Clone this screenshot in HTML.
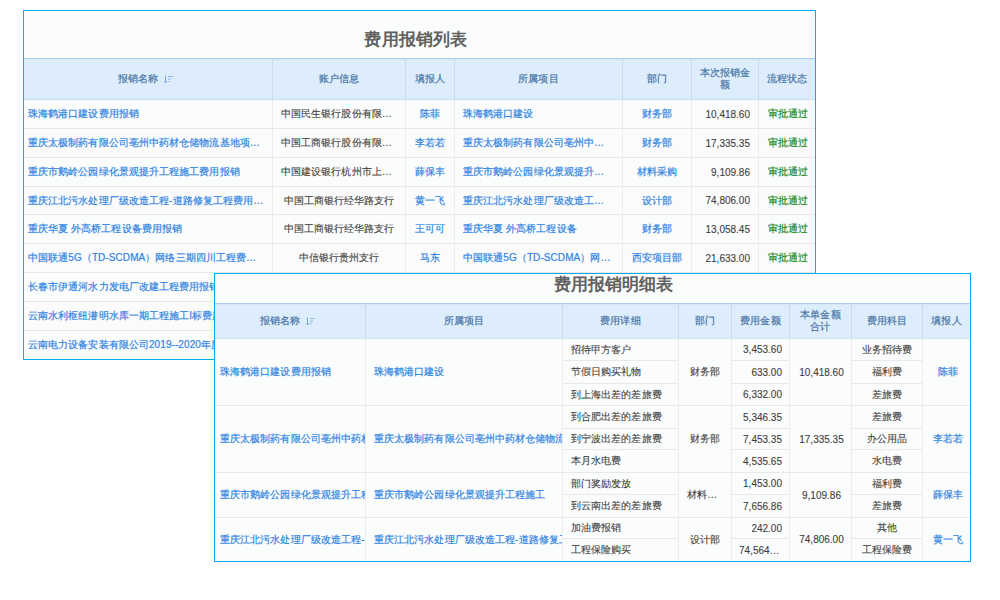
<!DOCTYPE html>
<html><head><meta charset="utf-8"><style>
html,body{margin:0;padding:0;background:#fff;width:1000px;height:600px;overflow:hidden}
body{position:relative;font-family:"Liberation Sans",sans-serif}
#t1,#t2{position:absolute;left:0;top:0;width:1000px;height:600px}
.c{position:absolute;box-sizing:border-box;-webkit-text-stroke-width:0.2px;letter-spacing:0.08px;display:flex;align-items:center;white-space:nowrap;overflow:hidden;line-height:12px;text-align:center}
.c span{display:block}
.c.clip span{overflow:visible}
.title{position:absolute;box-sizing:border-box;display:flex;align-items:center;justify-content:center;font-size:17px;font-weight:bold;color:#616161;line-height:20px;white-space:nowrap}
.d span{-webkit-text-stroke-width:0.1px}
.n span{letter-spacing:0;-webkit-text-stroke-width:0.1px;position:relative;top:0.5px}
.h span{display:flex;align-items:center;justify-content:center;flex-wrap:wrap}
</style></head><body>
<div id="t1">
<div style="position:absolute;left:23px;top:10px;width:793px;height:350px;background:#02acee"></div>
<div style="position:absolute;left:24px;top:11px;width:791px;height:47px;background:#fbfcfc"></div>
<div style="position:absolute;left:24px;top:58px;width:791px;height:1px;background:#a8cdee"></div>
<div style="position:absolute;left:24px;top:59px;width:791px;height:40px;background:#deedfb"></div>
<div style="position:absolute;left:24px;top:57px;width:791px;height:1px;background:#ffffff"></div>
<div style="position:absolute;left:24px;top:59px;width:791px;height:1px;background:#d6e8f8"></div>
<div style="position:absolute;left:24px;top:99px;width:791px;height:1px;background:#c8ddf0"></div>
<div style="position:absolute;left:272px;top:59px;width:1px;height:40px;background:#c6dcee"></div>
<div style="position:absolute;left:405px;top:59px;width:1px;height:40px;background:#c6dcee"></div>
<div style="position:absolute;left:454px;top:59px;width:1px;height:40px;background:#c6dcee"></div>
<div style="position:absolute;left:622px;top:59px;width:1px;height:40px;background:#c6dcee"></div>
<div style="position:absolute;left:691px;top:59px;width:1px;height:40px;background:#c6dcee"></div>
<div style="position:absolute;left:758px;top:59px;width:1px;height:40px;background:#c6dcee"></div>
<div style="position:absolute;left:24px;top:100px;width:791px;height:28px;background:#fbfcfc"></div>
<div style="position:absolute;left:24px;top:128px;width:791px;height:1px;background:#e8e8e8"></div>
<div style="position:absolute;left:24px;top:129px;width:791px;height:28px;background:#fbfbfb"></div>
<div style="position:absolute;left:24px;top:157px;width:791px;height:1px;background:#e8e8e8"></div>
<div style="position:absolute;left:24px;top:158px;width:791px;height:28px;background:#fbfcfc"></div>
<div style="position:absolute;left:24px;top:186px;width:791px;height:1px;background:#e8e8e8"></div>
<div style="position:absolute;left:24px;top:187px;width:791px;height:27px;background:#fbfbfb"></div>
<div style="position:absolute;left:24px;top:214px;width:791px;height:1px;background:#e8e8e8"></div>
<div style="position:absolute;left:24px;top:215px;width:791px;height:28px;background:#fbfcfc"></div>
<div style="position:absolute;left:24px;top:243px;width:791px;height:1px;background:#e8e8e8"></div>
<div style="position:absolute;left:24px;top:244px;width:791px;height:28px;background:#fbfbfb"></div>
<div style="position:absolute;left:24px;top:272px;width:791px;height:1px;background:#e8e8e8"></div>
<div style="position:absolute;left:24px;top:273px;width:791px;height:28px;background:#fbfcfc"></div>
<div style="position:absolute;left:24px;top:301px;width:791px;height:1px;background:#e8e8e8"></div>
<div style="position:absolute;left:24px;top:302px;width:791px;height:28px;background:#fbfbfb"></div>
<div style="position:absolute;left:24px;top:330px;width:791px;height:1px;background:#e8e8e8"></div>
<div style="position:absolute;left:24px;top:331px;width:791px;height:28px;background:#fbfcfc"></div>
<div style="position:absolute;left:272px;top:100px;width:1px;height:259px;background:#ececec"></div>
<div style="position:absolute;left:405px;top:100px;width:1px;height:259px;background:#ececec"></div>
<div style="position:absolute;left:454px;top:100px;width:1px;height:259px;background:#ececec"></div>
<div style="position:absolute;left:622px;top:100px;width:1px;height:259px;background:#ececec"></div>
<div style="position:absolute;left:691px;top:100px;width:1px;height:259px;background:#ececec"></div>
<div style="position:absolute;left:758px;top:100px;width:1px;height:259px;background:#ececec"></div>
<div class="title" style="left:24px;top:11px;width:791px;height:47px;padding-right:7px;padding-top:11px;letter-spacing:0.2px">费用报销列表</div>
<div class="c h" style="left:24px;top:59px;width:248px;height:40px;justify-content:center;padding:0 4px;color:#4674a6;font-size:10px;"><span>报销名称<svg width="10" height="9" viewBox="0 0 10 9" style="margin-left:6px;margin-right:4px;flex:none"><path d="M1.5 0.5V7.5" stroke="#79aadb" stroke-width="1"/><path d="M0 6.3L1.5 8L3 6.3" stroke="#79aadb" fill="none" stroke-width="1"/><path d="M4 1.5H9M4 4H7M4 6.5H5.5" stroke="#8db8e2" stroke-width="1"/></svg></span></div>
<div class="c h" style="left:273px;top:59px;width:132px;height:40px;justify-content:center;padding:0 4px;color:#4674a6;font-size:10px;"><span>账户信息</span></div>
<div class="c h" style="left:406px;top:59px;width:48px;height:40px;justify-content:center;padding:0 4px;color:#4674a6;font-size:10px;"><span>填报人</span></div>
<div class="c h" style="left:455px;top:59px;width:167px;height:40px;justify-content:center;padding:0 4px;color:#4674a6;font-size:10px;"><span>所属项目</span></div>
<div class="c h" style="left:623px;top:59px;width:68px;height:40px;justify-content:center;padding:0 4px;color:#4674a6;font-size:10px;"><span>部门</span></div>
<div class="c h" style="left:692px;top:59px;width:66px;height:40px;justify-content:center;padding:0 4px;color:#4674a6;font-size:10px;"><span>本次报销金<br>额</span></div>
<div class="c h" style="left:759px;top:59px;width:56px;height:40px;justify-content:center;padding:0 4px;color:#4674a6;font-size:10px;"><span>流程状态</span></div>
<div class="c " style="left:24px;top:100px;width:248px;height:28px;justify-content:flex-start;padding:0 4px;color:#2d83e3;font-size:10px;"><span>珠海鹤港口建设费用报销</span></div>
<div class="c  d" style="left:273px;top:100px;width:132px;height:28px;justify-content:flex-start;padding:0 8px;color:#3d3d3d;font-size:10px;"><span>中国民生银行股份有限…</span></div>
<div class="c " style="left:406px;top:100px;width:48px;height:28px;justify-content:center;padding:0 4px;color:#2d83e3;font-size:10px;"><span>陈菲</span></div>
<div class="c " style="left:455px;top:100px;width:167px;height:28px;justify-content:flex-start;padding:0 8px;color:#2d83e3;font-size:10px;"><span>珠海鹤港口建设</span></div>
<div class="c " style="left:623px;top:100px;width:68px;height:28px;justify-content:center;padding:0 4px;color:#2d83e3;font-size:10px;"><span>财务部</span></div>
<div class="c n d" style="left:692px;top:100px;width:66px;height:28px;justify-content:flex-end;padding:0 8px;color:#3d3d3d;font-size:10px;"><span>10,418.60</span></div>
<div class="c " style="left:759px;top:100px;width:56px;height:28px;justify-content:center;padding:0 4px;color:#218a21;font-size:10px;padding-left:4px;padding-right:2px"><span>审批通过</span></div>
<div class="c " style="left:24px;top:129px;width:248px;height:28px;justify-content:flex-start;padding:0 4px;color:#2d83e3;font-size:10px;"><span>重庆太极制药有限公司亳州中药材仓储物流基地项…</span></div>
<div class="c  d" style="left:273px;top:129px;width:132px;height:28px;justify-content:flex-start;padding:0 8px;color:#3d3d3d;font-size:10px;"><span>中国工商银行股份有限…</span></div>
<div class="c " style="left:406px;top:129px;width:48px;height:28px;justify-content:center;padding:0 4px;color:#2d83e3;font-size:10px;"><span>李若若</span></div>
<div class="c " style="left:455px;top:129px;width:167px;height:28px;justify-content:flex-start;padding:0 8px;color:#2d83e3;font-size:10px;"><span>重庆太极制药有限公司亳州中…</span></div>
<div class="c " style="left:623px;top:129px;width:68px;height:28px;justify-content:center;padding:0 4px;color:#2d83e3;font-size:10px;"><span>财务部</span></div>
<div class="c n d" style="left:692px;top:129px;width:66px;height:28px;justify-content:flex-end;padding:0 8px;color:#3d3d3d;font-size:10px;"><span>17,335.35</span></div>
<div class="c " style="left:759px;top:129px;width:56px;height:28px;justify-content:center;padding:0 4px;color:#218a21;font-size:10px;padding-left:4px;padding-right:2px"><span>审批通过</span></div>
<div class="c " style="left:24px;top:158px;width:248px;height:28px;justify-content:flex-start;padding:0 4px;color:#2d83e3;font-size:10px;"><span>重庆市鹅岭公园绿化景观提升工程施工费用报销</span></div>
<div class="c  d" style="left:273px;top:158px;width:132px;height:28px;justify-content:flex-start;padding:0 8px;color:#3d3d3d;font-size:10px;"><span>中国建设银行杭州市上…</span></div>
<div class="c " style="left:406px;top:158px;width:48px;height:28px;justify-content:center;padding:0 4px;color:#2d83e3;font-size:10px;"><span>薛保丰</span></div>
<div class="c " style="left:455px;top:158px;width:167px;height:28px;justify-content:flex-start;padding:0 8px;color:#2d83e3;font-size:10px;"><span>重庆市鹅岭公园绿化景观提升…</span></div>
<div class="c " style="left:623px;top:158px;width:68px;height:28px;justify-content:center;padding:0 4px;color:#2d83e3;font-size:10px;"><span>材料采购</span></div>
<div class="c n d" style="left:692px;top:158px;width:66px;height:28px;justify-content:flex-end;padding:0 8px;color:#3d3d3d;font-size:10px;"><span>9,109.86</span></div>
<div class="c " style="left:759px;top:158px;width:56px;height:28px;justify-content:center;padding:0 4px;color:#218a21;font-size:10px;padding-left:4px;padding-right:2px"><span>审批通过</span></div>
<div class="c " style="left:24px;top:187px;width:248px;height:27px;justify-content:flex-start;padding:0 4px;color:#2d83e3;font-size:10px;"><span>重庆江北污水处理厂级改造工程-道路修复工程费用…</span></div>
<div class="c  d" style="left:273px;top:187px;width:132px;height:27px;justify-content:center;padding:0 8px;color:#3d3d3d;font-size:10px;"><span>中国工商银行经华路支行</span></div>
<div class="c " style="left:406px;top:187px;width:48px;height:27px;justify-content:center;padding:0 4px;color:#2d83e3;font-size:10px;"><span>黄一飞</span></div>
<div class="c " style="left:455px;top:187px;width:167px;height:27px;justify-content:flex-start;padding:0 8px;color:#2d83e3;font-size:10px;"><span>重庆江北污水处理厂级改造工…</span></div>
<div class="c " style="left:623px;top:187px;width:68px;height:27px;justify-content:center;padding:0 4px;color:#2d83e3;font-size:10px;"><span>设计部</span></div>
<div class="c n d" style="left:692px;top:187px;width:66px;height:27px;justify-content:flex-end;padding:0 8px;color:#3d3d3d;font-size:10px;"><span>74,806.00</span></div>
<div class="c " style="left:759px;top:187px;width:56px;height:27px;justify-content:center;padding:0 4px;color:#218a21;font-size:10px;padding-left:4px;padding-right:2px"><span>审批通过</span></div>
<div class="c " style="left:24px;top:215px;width:248px;height:28px;justify-content:flex-start;padding:0 4px;color:#2d83e3;font-size:10px;"><span>重庆华夏 外高桥工程设备费用报销</span></div>
<div class="c  d" style="left:273px;top:215px;width:132px;height:28px;justify-content:center;padding:0 8px;color:#3d3d3d;font-size:10px;"><span>中国工商银行经华路支行</span></div>
<div class="c " style="left:406px;top:215px;width:48px;height:28px;justify-content:center;padding:0 4px;color:#2d83e3;font-size:10px;"><span>王可可</span></div>
<div class="c " style="left:455px;top:215px;width:167px;height:28px;justify-content:flex-start;padding:0 8px;color:#2d83e3;font-size:10px;"><span>重庆华夏 外高桥工程设备</span></div>
<div class="c " style="left:623px;top:215px;width:68px;height:28px;justify-content:center;padding:0 4px;color:#2d83e3;font-size:10px;"><span>财务部</span></div>
<div class="c n d" style="left:692px;top:215px;width:66px;height:28px;justify-content:flex-end;padding:0 8px;color:#3d3d3d;font-size:10px;"><span>13,058.45</span></div>
<div class="c " style="left:759px;top:215px;width:56px;height:28px;justify-content:center;padding:0 4px;color:#218a21;font-size:10px;padding-left:4px;padding-right:2px"><span>审批通过</span></div>
<div class="c " style="left:24px;top:244px;width:248px;height:28px;justify-content:flex-start;padding:0 4px;color:#2d83e3;font-size:10px;"><span>中国联通5G（TD-SCDMA）网络三期四川工程费…</span></div>
<div class="c  d" style="left:273px;top:244px;width:132px;height:28px;justify-content:center;padding:0 8px;color:#3d3d3d;font-size:10px;"><span>中信银行贵州支行</span></div>
<div class="c " style="left:406px;top:244px;width:48px;height:28px;justify-content:center;padding:0 4px;color:#2d83e3;font-size:10px;"><span>马东</span></div>
<div class="c " style="left:455px;top:244px;width:167px;height:28px;justify-content:flex-start;padding:0 8px;color:#2d83e3;font-size:10px;"><span>中国联通5G（TD-SCDMA）网…</span></div>
<div class="c " style="left:623px;top:244px;width:68px;height:28px;justify-content:center;padding:0 4px;color:#2d83e3;font-size:10px;"><span>西安项目部</span></div>
<div class="c n d" style="left:692px;top:244px;width:66px;height:28px;justify-content:flex-end;padding:0 8px;color:#3d3d3d;font-size:10px;"><span>21,633.00</span></div>
<div class="c " style="left:759px;top:244px;width:56px;height:28px;justify-content:center;padding:0 4px;color:#218a21;font-size:10px;padding-left:4px;padding-right:2px"><span>审批通过</span></div>
<div class="c " style="left:24px;top:273px;width:248px;height:28px;justify-content:flex-start;padding:0 4px;color:#2d83e3;font-size:10px;"><span>长春市伊通河水力发电厂改建工程费用报销</span></div>
<div class="c  d" style="left:273px;top:273px;width:132px;height:28px;justify-content:center;padding:0 8px;color:#3d3d3d;font-size:10px;"><span>中国工商银行经华路支行</span></div>
<div class="c " style="left:406px;top:273px;width:48px;height:28px;justify-content:center;padding:0 4px;color:#2d83e3;font-size:10px;"><span>黄一飞</span></div>
<div class="c " style="left:455px;top:273px;width:167px;height:28px;justify-content:flex-start;padding:0 8px;color:#2d83e3;font-size:10px;"><span>长春市伊通河水力发电厂改建</span></div>
<div class="c " style="left:623px;top:273px;width:68px;height:28px;justify-content:center;padding:0 4px;color:#2d83e3;font-size:10px;"><span>设计部</span></div>
<div class="c n d" style="left:692px;top:273px;width:66px;height:28px;justify-content:flex-end;padding:0 8px;color:#3d3d3d;font-size:10px;"><span>12,000.00</span></div>
<div class="c " style="left:759px;top:273px;width:56px;height:28px;justify-content:center;padding:0 4px;color:#218a21;font-size:10px;padding-left:4px;padding-right:2px"><span>审批通过</span></div>
<div class="c " style="left:24px;top:302px;width:248px;height:28px;justify-content:flex-start;padding:0 4px;color:#2d83e3;font-size:10px;"><span>云南水利枢纽潜明水库一期工程施工I标费用报销</span></div>
<div class="c  d" style="left:273px;top:302px;width:132px;height:28px;justify-content:center;padding:0 8px;color:#3d3d3d;font-size:10px;"><span>中国工商银行经华路支行</span></div>
<div class="c " style="left:406px;top:302px;width:48px;height:28px;justify-content:center;padding:0 4px;color:#2d83e3;font-size:10px;"><span>黄一飞</span></div>
<div class="c " style="left:455px;top:302px;width:167px;height:28px;justify-content:flex-start;padding:0 8px;color:#2d83e3;font-size:10px;"><span>云南水利枢纽潜明水库</span></div>
<div class="c " style="left:623px;top:302px;width:68px;height:28px;justify-content:center;padding:0 4px;color:#2d83e3;font-size:10px;"><span>设计部</span></div>
<div class="c n d" style="left:692px;top:302px;width:66px;height:28px;justify-content:flex-end;padding:0 8px;color:#3d3d3d;font-size:10px;"><span>12,000.00</span></div>
<div class="c " style="left:759px;top:302px;width:56px;height:28px;justify-content:center;padding:0 4px;color:#218a21;font-size:10px;padding-left:4px;padding-right:2px"><span>审批通过</span></div>
<div class="c " style="left:24px;top:331px;width:248px;height:28px;justify-content:flex-start;padding:0 4px;color:#2d83e3;font-size:10px;"><span>云南电力设备安装有限公司2019--2020年度费用报销</span></div>
<div class="c  d" style="left:273px;top:331px;width:132px;height:28px;justify-content:center;padding:0 8px;color:#3d3d3d;font-size:10px;"><span>中国工商银行经华路支行</span></div>
<div class="c " style="left:406px;top:331px;width:48px;height:28px;justify-content:center;padding:0 4px;color:#2d83e3;font-size:10px;"><span>黄一飞</span></div>
<div class="c " style="left:455px;top:331px;width:167px;height:28px;justify-content:flex-start;padding:0 8px;color:#2d83e3;font-size:10px;"><span>云南电力设备安装</span></div>
<div class="c " style="left:623px;top:331px;width:68px;height:28px;justify-content:center;padding:0 4px;color:#2d83e3;font-size:10px;"><span>设计部</span></div>
<div class="c n d" style="left:692px;top:331px;width:66px;height:28px;justify-content:flex-end;padding:0 8px;color:#3d3d3d;font-size:10px;"><span>12,000.00</span></div>
<div class="c " style="left:759px;top:331px;width:56px;height:28px;justify-content:center;padding:0 4px;color:#218a21;font-size:10px;padding-left:4px;padding-right:2px"><span>审批通过</span></div>
</div>
<div id="t2">
<div style="position:absolute;left:214px;top:273px;width:757px;height:289px;background:#02acee"></div>
<div style="position:absolute;left:215px;top:274px;width:755px;height:29px;background:#fbfcfc"></div>
<div style="position:absolute;left:215px;top:303px;width:755px;height:1px;background:#a8cdee"></div>
<div style="position:absolute;left:215px;top:304px;width:755px;height:34px;background:#deedfb"></div>
<div style="position:absolute;left:215px;top:302px;width:755px;height:1px;background:#ffffff"></div>
<div style="position:absolute;left:215px;top:304px;width:755px;height:1px;background:#d6e8f8"></div>
<div style="position:absolute;left:215px;top:338px;width:755px;height:1px;background:#d2e3f1"></div>
<div style="position:absolute;left:365px;top:304px;width:1px;height:34px;background:#c6dcee"></div>
<div style="position:absolute;left:562px;top:304px;width:1px;height:34px;background:#c6dcee"></div>
<div style="position:absolute;left:678px;top:304px;width:1px;height:34px;background:#c6dcee"></div>
<div style="position:absolute;left:731px;top:304px;width:1px;height:34px;background:#c6dcee"></div>
<div style="position:absolute;left:789px;top:304px;width:1px;height:34px;background:#c6dcee"></div>
<div style="position:absolute;left:851px;top:304px;width:1px;height:34px;background:#c6dcee"></div>
<div style="position:absolute;left:922px;top:304px;width:1px;height:34px;background:#c6dcee"></div>
<div style="position:absolute;left:215px;top:339px;width:755px;height:222px;background:#fbfcfc"></div>
<div style="position:absolute;left:215px;top:405px;width:755px;height:1px;background:#e8e8e8"></div>
<div style="position:absolute;left:215px;top:472px;width:755px;height:1px;background:#e8e8e8"></div>
<div style="position:absolute;left:215px;top:517px;width:755px;height:1px;background:#e8e8e8"></div>
<div style="position:absolute;left:563px;top:360px;width:115px;height:1px;background:#e8e8e8"></div>
<div style="position:absolute;left:732px;top:360px;width:57px;height:1px;background:#e8e8e8"></div>
<div style="position:absolute;left:852px;top:360px;width:70px;height:1px;background:#e8e8e8"></div>
<div style="position:absolute;left:563px;top:383px;width:115px;height:1px;background:#e8e8e8"></div>
<div style="position:absolute;left:732px;top:383px;width:57px;height:1px;background:#e8e8e8"></div>
<div style="position:absolute;left:852px;top:383px;width:70px;height:1px;background:#e8e8e8"></div>
<div style="position:absolute;left:563px;top:428px;width:115px;height:1px;background:#e8e8e8"></div>
<div style="position:absolute;left:732px;top:428px;width:57px;height:1px;background:#e8e8e8"></div>
<div style="position:absolute;left:852px;top:428px;width:70px;height:1px;background:#e8e8e8"></div>
<div style="position:absolute;left:563px;top:449px;width:115px;height:1px;background:#e8e8e8"></div>
<div style="position:absolute;left:732px;top:449px;width:57px;height:1px;background:#e8e8e8"></div>
<div style="position:absolute;left:852px;top:449px;width:70px;height:1px;background:#e8e8e8"></div>
<div style="position:absolute;left:563px;top:494px;width:115px;height:1px;background:#e8e8e8"></div>
<div style="position:absolute;left:732px;top:494px;width:57px;height:1px;background:#e8e8e8"></div>
<div style="position:absolute;left:852px;top:494px;width:70px;height:1px;background:#e8e8e8"></div>
<div style="position:absolute;left:563px;top:538px;width:115px;height:1px;background:#e8e8e8"></div>
<div style="position:absolute;left:732px;top:538px;width:57px;height:1px;background:#e8e8e8"></div>
<div style="position:absolute;left:852px;top:538px;width:70px;height:1px;background:#e8e8e8"></div>
<div style="position:absolute;left:365px;top:339px;width:1px;height:222px;background:#ececec"></div>
<div style="position:absolute;left:562px;top:339px;width:1px;height:222px;background:#ececec"></div>
<div style="position:absolute;left:678px;top:339px;width:1px;height:222px;background:#ececec"></div>
<div style="position:absolute;left:731px;top:339px;width:1px;height:222px;background:#ececec"></div>
<div style="position:absolute;left:789px;top:339px;width:1px;height:222px;background:#ececec"></div>
<div style="position:absolute;left:851px;top:339px;width:1px;height:222px;background:#ececec"></div>
<div style="position:absolute;left:922px;top:339px;width:1px;height:222px;background:#ececec"></div>
<div class="title" style="left:215px;top:274px;width:755px;height:29px;padding-left:42px;align-items:flex-start;padding-top:1px">费用报销明细表</div>
<div class="c h" style="left:215px;top:304px;width:150px;height:34px;justify-content:center;padding:0 4px;color:#4674a6;font-size:10px;"><span>报销名称<svg width="10" height="9" viewBox="0 0 10 9" style="margin-left:6px;margin-right:4px;flex:none"><path d="M1.5 0.5V7.5" stroke="#79aadb" stroke-width="1"/><path d="M0 6.3L1.5 8L3 6.3" stroke="#79aadb" fill="none" stroke-width="1"/><path d="M4 1.5H9M4 4H7M4 6.5H5.5" stroke="#8db8e2" stroke-width="1"/></svg></span></div>
<div class="c h" style="left:366px;top:304px;width:196px;height:34px;justify-content:center;padding:0 4px;color:#4674a6;font-size:10px;"><span>所属项目</span></div>
<div class="c h" style="left:563px;top:304px;width:115px;height:34px;justify-content:center;padding:0 4px;color:#4674a6;font-size:10px;"><span>费用详细</span></div>
<div class="c h" style="left:679px;top:304px;width:52px;height:34px;justify-content:center;padding:0 4px;color:#4674a6;font-size:10px;"><span>部门</span></div>
<div class="c h" style="left:732px;top:304px;width:57px;height:34px;justify-content:center;padding:0 4px;color:#4674a6;font-size:10px;"><span>费用金额</span></div>
<div class="c h" style="left:790px;top:304px;width:61px;height:34px;justify-content:center;padding:0 4px;color:#4674a6;font-size:10px;"><span>本单金额<br>合计</span></div>
<div class="c h" style="left:852px;top:304px;width:70px;height:34px;justify-content:center;padding:0 4px;color:#4674a6;font-size:10px;"><span>费用科目</span></div>
<div class="c h" style="left:923px;top:304px;width:47px;height:34px;justify-content:center;padding:0 4px;color:#4674a6;font-size:10px;"><span>填报人</span></div>
<div class="c clip" style="left:215px;top:339px;width:150px;height:66px;justify-content:flex-start;padding:0 5px;color:#2d83e3;font-size:10px;"><span>珠海鹤港口建设费用报销</span></div>
<div class="c clip" style="left:366px;top:339px;width:196px;height:66px;justify-content:flex-start;padding:0 8px;color:#2d83e3;font-size:10px;"><span>珠海鹤港口建设</span></div>
<div class="c  d" style="left:679px;top:339px;width:52px;height:66px;justify-content:center;padding:0 8px;color:#3d3d3d;font-size:10px;"><span>财务部</span></div>
<div class="c n d" style="left:790px;top:339px;width:61px;height:66px;justify-content:center;padding:0 4px;color:#3d3d3d;font-size:10px;padding-left:6px;padding-right:4px"><span>10,418.60</span></div>
<div class="c " style="left:923px;top:339px;width:47px;height:66px;justify-content:center;padding:0 4px;color:#2d83e3;font-size:10px;padding-left:7px;padding-right:4px"><span>陈菲</span></div>
<div class="c  d" style="left:563px;top:339px;width:115px;height:21px;justify-content:flex-start;padding:0 8px;color:#3d3d3d;font-size:10px;"><span>招待甲方客户</span></div>
<div class="c n d" style="left:732px;top:339px;width:57px;height:21px;justify-content:flex-end;padding:0 7px;color:#3d3d3d;font-size:10px;"><span>3,453.60</span></div>
<div class="c  d" style="left:852px;top:339px;width:70px;height:21px;justify-content:center;padding:0 4px;color:#3d3d3d;font-size:10px;"><span>业务招待费</span></div>
<div class="c  d" style="left:563px;top:361px;width:115px;height:22px;justify-content:flex-start;padding:0 8px;color:#3d3d3d;font-size:10px;"><span>节假日购买礼物</span></div>
<div class="c n d" style="left:732px;top:361px;width:57px;height:22px;justify-content:flex-end;padding:0 7px;color:#3d3d3d;font-size:10px;"><span>633.00</span></div>
<div class="c  d" style="left:852px;top:361px;width:70px;height:22px;justify-content:center;padding:0 4px;color:#3d3d3d;font-size:10px;"><span>福利费</span></div>
<div class="c  d" style="left:563px;top:384px;width:115px;height:21px;justify-content:flex-start;padding:0 8px;color:#3d3d3d;font-size:10px;"><span>到上海出差的差旅费</span></div>
<div class="c n d" style="left:732px;top:384px;width:57px;height:21px;justify-content:flex-end;padding:0 7px;color:#3d3d3d;font-size:10px;"><span>6,332.00</span></div>
<div class="c  d" style="left:852px;top:384px;width:70px;height:21px;justify-content:center;padding:0 4px;color:#3d3d3d;font-size:10px;"><span>差旅费</span></div>
<div class="c clip" style="left:215px;top:406px;width:150px;height:66px;justify-content:flex-start;padding:0 5px;color:#2d83e3;font-size:10px;"><span>重庆太极制药有限公司亳州中药材仓储物流基地项目费用报销</span></div>
<div class="c clip" style="left:366px;top:406px;width:196px;height:66px;justify-content:flex-start;padding:0 8px;color:#2d83e3;font-size:10px;"><span>重庆太极制药有限公司亳州中药材仓储物流基地项目</span></div>
<div class="c  d" style="left:679px;top:406px;width:52px;height:66px;justify-content:center;padding:0 8px;color:#3d3d3d;font-size:10px;"><span>财务部</span></div>
<div class="c n d" style="left:790px;top:406px;width:61px;height:66px;justify-content:center;padding:0 4px;color:#3d3d3d;font-size:10px;padding-left:6px;padding-right:4px"><span>17,335.35</span></div>
<div class="c " style="left:923px;top:406px;width:47px;height:66px;justify-content:center;padding:0 4px;color:#2d83e3;font-size:10px;padding-left:7px;padding-right:4px"><span>李若若</span></div>
<div class="c  d" style="left:563px;top:406px;width:115px;height:22px;justify-content:flex-start;padding:0 8px;color:#3d3d3d;font-size:10px;"><span>到合肥出差的差旅费</span></div>
<div class="c n d" style="left:732px;top:406px;width:57px;height:22px;justify-content:flex-end;padding:0 7px;color:#3d3d3d;font-size:10px;"><span>5,346.35</span></div>
<div class="c  d" style="left:852px;top:406px;width:70px;height:22px;justify-content:center;padding:0 4px;color:#3d3d3d;font-size:10px;"><span>差旅费</span></div>
<div class="c  d" style="left:563px;top:429px;width:115px;height:20px;justify-content:flex-start;padding:0 8px;color:#3d3d3d;font-size:10px;"><span>到宁波出差的差旅费</span></div>
<div class="c n d" style="left:732px;top:429px;width:57px;height:20px;justify-content:flex-end;padding:0 7px;color:#3d3d3d;font-size:10px;"><span>7,453.35</span></div>
<div class="c  d" style="left:852px;top:429px;width:70px;height:20px;justify-content:center;padding:0 4px;color:#3d3d3d;font-size:10px;"><span>办公用品</span></div>
<div class="c  d" style="left:563px;top:450px;width:115px;height:22px;justify-content:flex-start;padding:0 8px;color:#3d3d3d;font-size:10px;"><span>本月水电费</span></div>
<div class="c n d" style="left:732px;top:450px;width:57px;height:22px;justify-content:flex-end;padding:0 7px;color:#3d3d3d;font-size:10px;"><span>4,535.65</span></div>
<div class="c  d" style="left:852px;top:450px;width:70px;height:22px;justify-content:center;padding:0 4px;color:#3d3d3d;font-size:10px;"><span>水电费</span></div>
<div class="c clip" style="left:215px;top:473px;width:150px;height:44px;justify-content:flex-start;padding:0 5px;color:#2d83e3;font-size:10px;"><span>重庆市鹅岭公园绿化景观提升工程施工费用报销</span></div>
<div class="c clip" style="left:366px;top:473px;width:196px;height:44px;justify-content:flex-start;padding:0 8px;color:#2d83e3;font-size:10px;"><span>重庆市鹅岭公园绿化景观提升工程施工</span></div>
<div class="c  d" style="left:679px;top:473px;width:52px;height:44px;justify-content:flex-start;padding:0 8px;color:#3d3d3d;font-size:10px;"><span>材料…</span></div>
<div class="c n d" style="left:790px;top:473px;width:61px;height:44px;justify-content:center;padding:0 4px;color:#3d3d3d;font-size:10px;padding-left:6px;padding-right:4px"><span>9,109.86</span></div>
<div class="c " style="left:923px;top:473px;width:47px;height:44px;justify-content:center;padding:0 4px;color:#2d83e3;font-size:10px;padding-left:7px;padding-right:4px"><span>薛保丰</span></div>
<div class="c  d" style="left:563px;top:473px;width:115px;height:21px;justify-content:flex-start;padding:0 8px;color:#3d3d3d;font-size:10px;"><span>部门奖励发放</span></div>
<div class="c n d" style="left:732px;top:473px;width:57px;height:21px;justify-content:flex-end;padding:0 7px;color:#3d3d3d;font-size:10px;"><span>1,453.00</span></div>
<div class="c  d" style="left:852px;top:473px;width:70px;height:21px;justify-content:center;padding:0 4px;color:#3d3d3d;font-size:10px;"><span>福利费</span></div>
<div class="c  d" style="left:563px;top:495px;width:115px;height:22px;justify-content:flex-start;padding:0 8px;color:#3d3d3d;font-size:10px;"><span>到云南出差的差旅费</span></div>
<div class="c n d" style="left:732px;top:495px;width:57px;height:22px;justify-content:flex-end;padding:0 7px;color:#3d3d3d;font-size:10px;"><span>7,656.86</span></div>
<div class="c  d" style="left:852px;top:495px;width:70px;height:22px;justify-content:center;padding:0 4px;color:#3d3d3d;font-size:10px;"><span>差旅费</span></div>
<div class="c clip" style="left:215px;top:518px;width:150px;height:43px;justify-content:flex-start;padding:0 5px;color:#2d83e3;font-size:10px;"><span>重庆江北污水处理厂级改造工程-道路修复工程费用报销</span></div>
<div class="c clip" style="left:366px;top:518px;width:196px;height:43px;justify-content:flex-start;padding:0 8px;color:#2d83e3;font-size:10px;"><span>重庆江北污水处理厂级改造工程-道路修复工程</span></div>
<div class="c  d" style="left:679px;top:518px;width:52px;height:43px;justify-content:center;padding:0 8px;color:#3d3d3d;font-size:10px;"><span>设计部</span></div>
<div class="c n d" style="left:790px;top:518px;width:61px;height:43px;justify-content:center;padding:0 4px;color:#3d3d3d;font-size:10px;padding-left:6px;padding-right:4px"><span>74,806.00</span></div>
<div class="c " style="left:923px;top:518px;width:47px;height:43px;justify-content:center;padding:0 4px;color:#2d83e3;font-size:10px;padding-left:7px;padding-right:4px"><span>黄一飞</span></div>
<div class="c  d" style="left:563px;top:518px;width:115px;height:20px;justify-content:flex-start;padding:0 8px;color:#3d3d3d;font-size:10px;"><span>加油费报销</span></div>
<div class="c n d" style="left:732px;top:518px;width:57px;height:20px;justify-content:flex-end;padding:0 7px;color:#3d3d3d;font-size:10px;"><span>242.00</span></div>
<div class="c  d" style="left:852px;top:518px;width:70px;height:20px;justify-content:center;padding:0 4px;color:#3d3d3d;font-size:10px;"><span>其他</span></div>
<div class="c  d" style="left:563px;top:539px;width:115px;height:22px;justify-content:flex-start;padding:0 8px;color:#3d3d3d;font-size:10px;"><span>工程保险购买</span></div>
<div class="c n d" style="left:732px;top:539px;width:57px;height:22px;justify-content:flex-start;padding:0 7px;color:#3d3d3d;font-size:10px;"><span>74,564…</span></div>
<div class="c  d" style="left:852px;top:539px;width:70px;height:22px;justify-content:center;padding:0 4px;color:#3d3d3d;font-size:10px;"><span>工程保险费</span></div>
</div>
</body></html>
